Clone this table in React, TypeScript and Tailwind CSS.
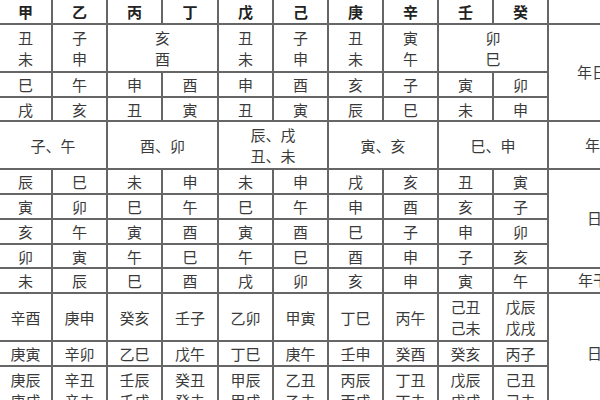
const header = ["甲", "乙", "丙", "丁", "戊", "己", "庚", "辛", "壬", "癸"];

const single: { h: string; cells: string[] }[] = [
  { h: "h-[25px]", cells: ["巳", "午", "申", "酉", "申", "酉", "亥", "子", "寅", "卯"] },
  { h: "h-[24px]", cells: ["戌", "亥", "丑", "寅", "丑", "寅", "辰", "巳", "未", "申"] },
];

const block2 = [
  ["辰", "巳", "未", "申", "未", "申", "戌", "亥", "丑", "寅"],
  ["寅", "卯", "巳", "午", "巳", "午", "申", "酉", "亥", "子"],
  ["亥", "午", "寅", "酉", "寅", "酉", "巳", "子", "申", "卯"],
  ["卯", "寅", "午", "巳", "午", "巳", "酉", "申", "子", "亥"],
];

const widths = [53, 55, 55, 56, 55, 55, 55, 55, 55, 55, 140];

const td = "border-2 border-[#666] text-center align-middle p-0 leading-[21px]";
const side = "border-2 border-[#666] text-left align-middle p-0 whitespace-nowrap";

function Two({ a, b }: { a: string; b: string }) {
  return (
    <div className="flex flex-col items-center">
      <span>{a}</span>
      <span>{b}</span>
    </div>
  );
}

export default function App() {
  return (
    <div className="w-[600px] h-[400px] overflow-hidden bg-white">
      <table
        className="-mt-[2px] -ml-[2px] border-collapse table-fixed text-[15px] text-[#3a3a3a]"
        style={{ fontFamily: '"Noto Sans CJK SC", "Noto Sans", sans-serif', width: widths.reduce((s, w) => s + w, 0) }}
      >
        <colgroup>
          {widths.map((w, i) => (
            <col key={i} style={{ width: w }} />
          ))}
        </colgroup>
        <tbody>
          <tr className="h-[25px]">
            {header.map((c) => (
              <td key={c} className={`${td} font-bold text-[#222]`}>{c}</td>
            ))}
            <td className={side}></td>
          </tr>

          <tr className="h-[48px]">
            <td className={td}><Two a="丑" b="未" /></td>
            <td className={td}><Two a="子" b="申" /></td>
            <td className={td} colSpan={2}><Two a="亥" b="酉" /></td>
            <td className={td}><Two a="丑" b="未" /></td>
            <td className={td}><Two a="子" b="申" /></td>
            <td className={td}><Two a="丑" b="未" /></td>
            <td className={td}><Two a="寅" b="午" /></td>
            <td className={td} colSpan={2}><Two a="卯" b="巳" /></td>
            <td className={`${side} pl-[28px]`} rowSpan={3}>年日干支</td>
          </tr>
          {single.map((r, i) => (
            <tr key={i} className={r.h}>
              {r.cells.map((c, j) => (
                <td key={j} className={td}>{c}</td>
              ))}
            </tr>
          ))}

          <tr className="h-[48px]">
            <td className={td} colSpan={2}>子、午</td>
            <td className={td} colSpan={2}>酉、卯</td>
            <td className={td} colSpan={2}><Two a="辰、戌" b="丑、未" /></td>
            <td className={td} colSpan={2}>寅、亥</td>
            <td className={td} colSpan={2}>巳、申</td>
            <td className={`${side} pl-[36px]`}>年支</td>
          </tr>

          {block2.map((r, i) => (
            <tr key={i} className={i === 3 ? "h-[24px]" : "h-[25px]"}>
              {r.map((c, j) => (
                <td key={j} className={td}>{c}</td>
              ))}
              {i === 0 && (
                <td className={`${side} pl-[38px]`} rowSpan={4}>日干</td>
              )}
            </tr>
          ))}

          <tr className="h-[25px]">
            {["未", "辰", "巳", "酉", "戌", "卯", "亥", "申", "寅", "午"].map((c, j) => (
              <td key={j} className={td}>{c}</td>
            ))}
            <td className={`${side} pl-[29px]`}>年干</td>
          </tr>

          <tr className="h-[48px]">
            {["辛酉", "庚申", "癸亥", "壬子", "乙卯", "甲寅", "丁巳", "丙午"].map((c, j) => (
              <td key={j} className={td}>{c}</td>
            ))}
            <td className={td}><Two a="己丑" b="己未" /></td>
            <td className={td}><Two a="戊辰" b="戊戌" /></td>
            <td className={`${side} pl-[38px]`} rowSpan={3}>日柱</td>
          </tr>
          <tr className="h-[25px]">
            {["庚寅", "辛卯", "乙巳", "戊午", "丁巳", "庚午", "壬申", "癸酉", "癸亥", "丙子"].map((c, j) => (
              <td key={j} className={td}>{c}</td>
            ))}
          </tr>
          <tr className="h-[48px]">
            {[
              ["庚辰", "庚戌"],
              ["辛丑", "辛未"],
              ["壬辰", "壬戌"],
              ["癸丑", "癸未"],
              ["甲辰", "甲戌"],
              ["乙丑", "乙未"],
              ["丙辰", "丙戌"],
              ["丁丑", "丁未"],
              ["戊辰", "戊戌"],
              ["己丑", "己未"],
            ].map(([a, b], j) => (
              <td key={j} className={td}><Two a={a} b={b} /></td>
            ))}
          </tr>
        </tbody>
      </table>
    </div>
  );
}
